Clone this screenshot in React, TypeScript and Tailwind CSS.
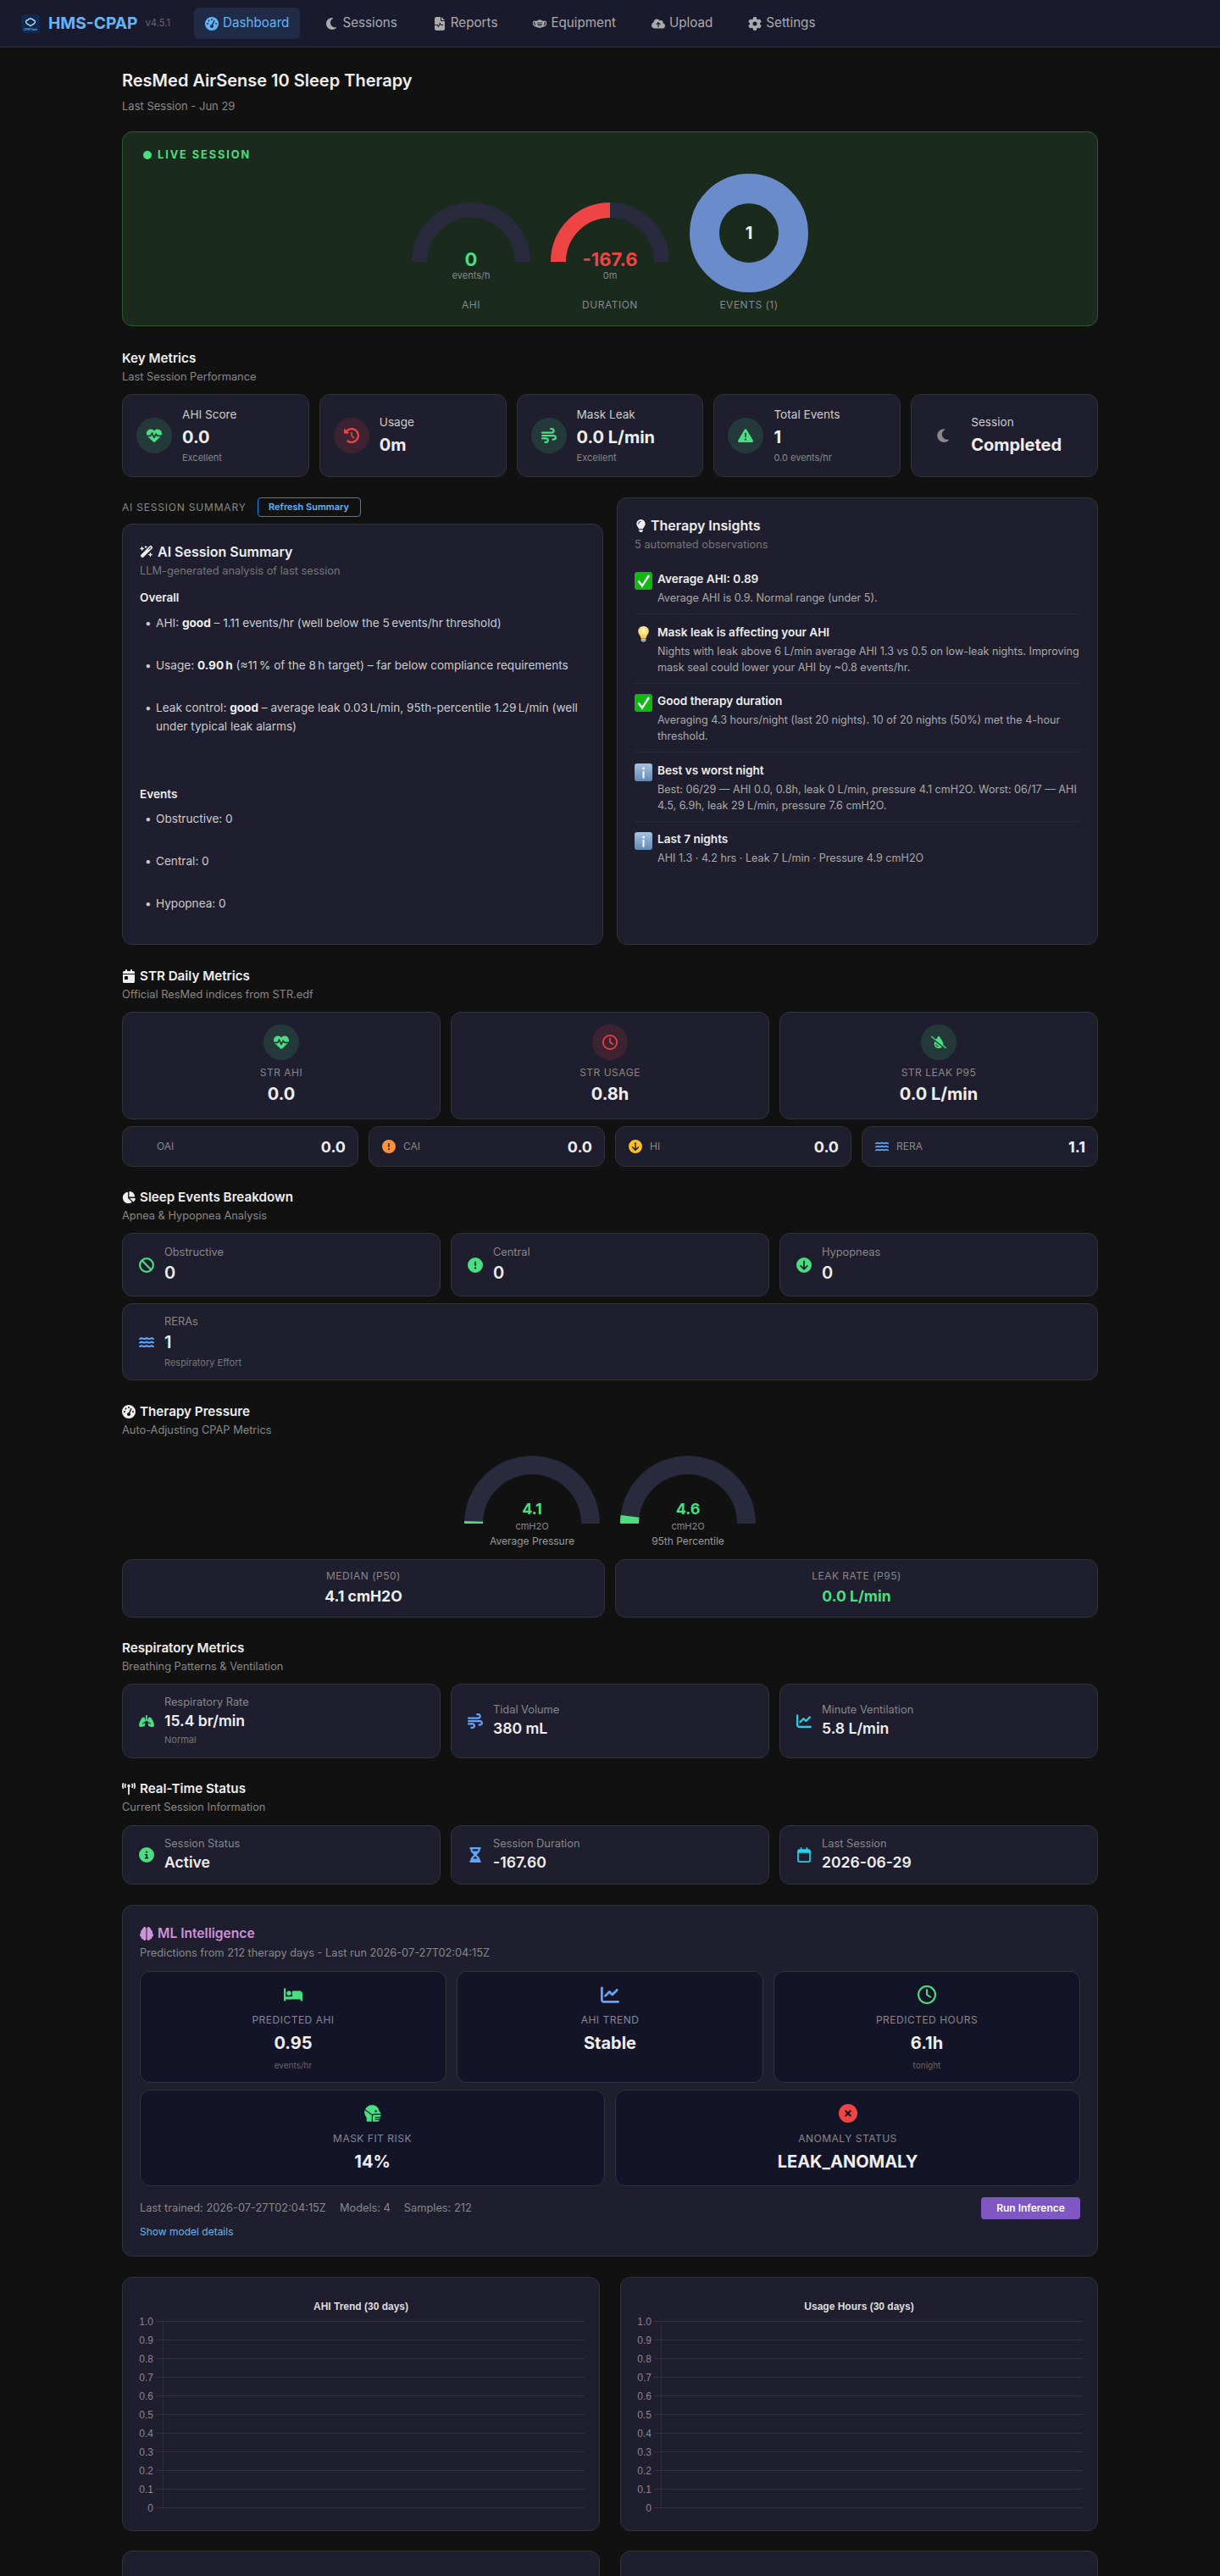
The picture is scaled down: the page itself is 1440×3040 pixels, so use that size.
import React from "react";
import {
  FaGaugeHigh, FaMoon, FaFileWaveform, FaMaskFace, FaCloudArrowUp, FaGear, FaHeartPulse, FaClockRotateLeft, FaWind,
  FaTriangleExclamation, FaWandMagicSparkles, FaLightbulb, FaCalendarDay, FaRegClock, FaDropletSlash, FaCircleExclamation,
  FaCircleArrowDown, FaWater, FaChartPie, FaBan, FaLungs, FaChartLine, FaTowerBroadcast, FaCircleInfo, FaHourglassHalf,
  FaRegCalendar, FaBrain, FaBed, FaHeadSideMask, FaCircleXmark,
} from "react-icons/fa6";

const card = "bg-[#1e1e2e] border border-[#333338] rounded-xl";

function polar(cx: number, cy: number, r: number, pct: number) {
  const a = Math.PI * (1 - pct);
  return [cx + r * Math.cos(a), cy - r * Math.sin(a)];
}

function Arc({ size, stroke, pct, color }: { size: number; stroke: number; pct: number; color: string }) {
  const c = size / 2;
  const r = c - stroke / 2;
  const h = size / 2;
  const [ex, ey] = polar(c, h, r, pct);
  return (
    <svg width={size} height={h} viewBox={`0 0 ${size} ${h}`} className="block">
      <path d={`M ${c - r} ${h} A ${r} ${r} 0 0 1 ${c + r} ${h}`} fill="none" stroke="#2a2a3e" strokeWidth={stroke} />
      {pct > 0 && <path d={`M ${c - r} ${h} A ${r} ${r} 0 0 1 ${ex} ${ey}`} fill="none" stroke={color} strokeWidth={stroke} />}
    </svg>
  );
}

function LiveGauge({ value, unit, label, pct, color }: { value: string; unit: string; label: string; pct: number; color: string }) {
  return (
    <div className="w-[140px] flex flex-col items-center">
      <div className="relative w-[140px] h-[70px]">
        <Arc size={140} stroke={18} pct={pct} color={color} />
        <div className="absolute left-0 right-0 top-[53px] text-center">
          <div className="text-[22px] leading-[28px] font-bold" style={{ color }}>{value}</div>
          <div className="text-[11px] leading-[14px] text-[#888] mt-[-2px]">{unit}</div>
        </div>
      </div>
      <div className="text-[12px] leading-[16px] text-[#888] tracking-[0.5px] mt-[43px]">{label}</div>
    </div>
  );
}

function PressureGauge({ value, label, pct }: { value: string; label: string; pct: number }) {
  return (
    <div className="w-[160px] flex flex-col items-center">
      <div className="relative w-[160px] h-[81px]">
        <Arc size={160} stroke={22} pct={pct} color="#4ade80" />
        <div className="absolute left-0 right-0 top-[51px] text-center">
          <div className="text-[18px] leading-[24px] font-bold text-[#4ade80]">{value}</div>
          <div className="text-[11px] leading-[14px] text-[#888] mt-[1px]">cmH2O</div>
        </div>
      </div>
      <div className="text-[12px] leading-[16px] text-[#999] mt-[12px]">{label}</div>
    </div>
  );
}

function Heading({ title, sub, icon, className }: { title: string; sub: string; icon?: React.ReactNode; className: string }) {
  return (
    <div className={className}>
      <h2 className="flex items-center gap-[5px] text-[15.2px] leading-[24px] font-semibold text-[#eeeeee]">{icon}{title}</h2>
      <p className="text-[12.8px] leading-[16px] text-[#888] mt-[2px]">{sub}</p>
    </div>
  );
}

function IconCircle({ tone, children }: { tone: "green" | "red" | "none"; children: React.ReactNode }) {
  const cls = tone === "green" ? "bg-[#4ade80]/15 text-[#4ade80]" : tone === "red" ? "bg-[#ef4444]/15 text-[#ef4444]" : "text-[#888]";
  return <div className={`w-[42px] h-[42px] rounded-full flex items-center justify-center shrink-0 text-[18px] ${cls}`}>{children}</div>;
}

function KeyCard({ icon, tone, label, value, sub }: { icon: React.ReactNode; tone: "green" | "red" | "none"; label: string; value: string; sub?: string }) {
  return (
    <div className={`${card} h-[98px] px-4 flex items-center gap-3`}>
      <IconCircle tone={tone}>{icon}</IconCircle>
      <div>
        <div className="text-[13.6px] leading-[18px] text-[#ccc]">{label}</div>
        <div className="text-[20px] leading-[28px] font-bold text-[#eeeeee] mt-[4px]">{value}</div>
        {sub && <div className="text-[11px] leading-[16px] text-[#888] mt-[2px]">{sub}</div>}
      </div>
    </div>
  );
}

function StrCard({ icon, tone, label, value }: { icon: React.ReactNode; tone: "green" | "red"; label: string; value: string }) {
  return (
    <div className={`${card} h-[127px] flex flex-col items-center pt-[14px]`}>
      <IconCircle tone={tone}>{icon}</IconCircle>
      <div className="text-[12px] leading-[16px] text-[#888] tracking-[0.5px] mt-[7px]">{label}</div>
      <div className="text-[20px] leading-[28px] font-bold text-[#eeeeee] mt-[3px]">{value}</div>
    </div>
  );
}

function MiniCard({ icon, label, value }: { icon?: React.ReactNode; label: string; value: string }) {
  return (
    <div className={`${card} h-[48px] px-[14px] flex items-center`}>
      <span className="w-[18px] flex justify-center text-[16px] shrink-0">{icon}</span>
      <span className="text-[12px] text-[#888] ml-[8px] flex-1">{label}</span>
      <span className="text-[18px] font-bold text-[#eeeeee]">{value}</span>
    </div>
  );
}

function StatCard({ icon, label, value, sub, h, big }: { icon: React.ReactNode; label: string; value: string; sub?: string; h: string; big?: boolean }) {
  return (
    <div className={`${card} ${h} px-[19px] flex items-center gap-[12px]`}>
      <span className="w-[18px] flex justify-center text-[18px] shrink-0">{icon}</span>
      <div>
        <div className="text-[12.8px] leading-[16px] text-[#888]">{label}</div>
        <div className={`${big ? "text-[20px] leading-[28px]" : "text-[17.6px] leading-[24px]"} font-semibold text-[#eeeeee] mt-[2px]`}>{value}</div>
        {sub && <div className="text-[11px] leading-[16px] text-[#777] mt-[2px]">{sub}</div>}
      </div>
    </div>
  );
}

function MlCard({ icon, label, value, sub, h }: { icon: React.ReactNode; label: string; value: string; sub?: string; h: string }) {
  return (
    <div className={`bg-[#141428] border border-[#333338] rounded-xl ${h} flex flex-col items-center pt-[15px]`}>
      <span className="h-[24px] flex items-center text-[22px]">{icon}</span>
      <div className="text-[12px] leading-[16px] text-[#888] tracking-[0.5px] mt-[10px]">{label}</div>
      <div className="text-[20px] leading-[28px] font-bold text-[#eeeeee] mt-[5px]">{value}</div>
      {sub && <div className="text-[10px] leading-[14px] text-[#666] mt-[5px]">{sub}</div>}
    </div>
  );
}

function EmojiBox({ kind }: { kind: "check" | "bulb" | "info" }) {
  if (kind === "bulb") {
    return (
      <svg width="21" height="21" viewBox="0 0 21 23" className="shrink-0 mt-[1px]">
        <defs>
          <radialGradient id="b" cx="50%" cy="35%" r="60%"><stop offset="0" stopColor="#fffbd0" /><stop offset="1" stopColor="#f6c945" /></radialGradient>
        </defs>
        <path d="M10.5 1C6.2 1 3.6 4.2 3.6 7.6c0 3.6 3 5.4 3.6 9h6.6c.6-3.6 3.6-5.4 3.6-9C17.4 4.2 14.8 1 10.5 1z" fill="url(#b)" />
        <rect x="7.4" y="16.6" width="6.2" height="4" rx="1" fill="#b9b9b9" />
        <rect x="8.6" y="20.6" width="3.8" height="1.4" rx=".7" fill="#777" />
      </svg>
    );
  }
  if (kind === "check") {
    return (
      <svg width="21" height="21" viewBox="0 0 21 21" className="shrink-0 mt-[1px]">
        <rect width="21" height="21" rx="3" fill="#12b812" />
        <path d="M4.500 10.500l4.500 6L17 4" fill="none" stroke="#fff" strokeWidth="2.400" />
      </svg>
    );
  }
  return (
    <svg width="21" height="21" viewBox="0 0 21 21" className="shrink-0 mt-[1px]">
      <defs>
        <linearGradient id="i" x1="0" y1="0" x2="0" y2="1"><stop offset="0" stopColor="#a6c3e0" /><stop offset="1" stopColor="#5f8ab5" /></linearGradient>
      </defs>
      <rect width="21" height="21" rx="3" fill="url(#i)" />
      <circle cx="10.500" cy="6" r="1.400" fill="#fff" />
      <rect x="9.500" y="9" width="2" height="8.500" fill="#fff" />
    </svg>
  );
}

function Insight({ kind, title, lines, cls }: { kind: "check" | "bulb" | "info"; title: string; lines: string; cls: string }) {
  return (
    <div className={`flex gap-[6px] ${cls}`}>
      <EmojiBox kind={kind} />
      <div className="flex-1">
        <div className="text-[13.6px] leading-[18px] font-semibold text-[#eeeeee]">{title}</div>
        <div className="text-[12.6px] leading-[19px] text-[#aaa] mt-[4px]">{lines}</div>
      </div>
    </div>
  );
}

function Bullet({ children }: { children: React.ReactNode }) {
  return (
    <li className="flex text-[13.6px] leading-[22px] text-[#ccc] mb-[28px] last:mb-0">
      <span className="w-[19px] shrink-0 pl-[6px] text-[#ccc]">•</span>
      <span>{children}</span>
    </li>
  );
}

function Chart({ title }: { title: string }) {
  const ticks = ["1.0", "0.9", "0.8", "0.7", "0.6", "0.5", "0.4", "0.3", "0.2", "0.1", "0"];
  return (
    <div className={`${card} h-[300px] overflow-hidden`}>
      <svg width="562" height="298" viewBox="0 0 562 298" className="block font-['Liberation_Sans',sans-serif]">
        <text x="281" y="38" textAnchor="middle" fontSize="12" fontWeight="700" fill="#dddddd">{title}</text>
        <line x1="47.500" y1="51" x2="47.500" y2="271" stroke="#2a2a38" />
        {ticks.map((t, i) => (
          <g key={t}>
            <line x1="39" x2="545" y1={51.5 + i * 22} y2={51.5 + i * 22} stroke="#333338" />
            <text x="36" y={55.5 + i * 22} textAnchor="end" fontSize="12" fill="#888888">{t}</text>
          </g>
        ))}
      </svg>
    </div>
  );
}

const navItems = [
  { label: "Dashboard", icon: <FaGaugeHigh />, active: true },
  { label: "Sessions", icon: <FaMoon /> },
  { label: "Reports", icon: <FaFileWaveform /> },
  { label: "Equipment", icon: <FaMaskFace /> },
  { label: "Upload", icon: <FaCloudArrowUp /> },
  { label: "Settings", icon: <FaGear /> },
];

export default function App() {
  return (
    <div className="h-[3040px] overflow-hidden bg-[#111111] font-['Inter',sans-serif]">
      <nav className="h-[56px] bg-[#1a1a2e] border-b border-[#333338] flex items-center pl-[25px]">
        <svg width="22" height="22" viewBox="0 0 22 22" className="shrink-0">
          <rect width="22" height="22" rx="4" fill="#0c2a52" />
          <path d="M7 11c-2-1-2-4 1-4.500C9 4.500 13 4.500 14 6.500c3 .5 3 3.500 1 4.500-1 1-3 1.500-4 2.500-1-1-3-1.500-4-2.500z" fill="none" stroke="#cfe6ff" strokeWidth="1.300" />
          <text x="11" y="18.500" textAnchor="middle" fontSize="3" fill="#bcd8f5">CPAP Dash</text>
        </svg>
        <span className="ml-[10px] text-[19.2px] font-bold text-[#64b5f6]">HMS-CPAP</span>
        <span className="ml-[9px] text-[11.2px] text-[#666]">v4.5.1</span>
        <div className="ml-[28px] flex items-center gap-[16px]">
          {navItems.map((n) => (
            <a key={n.label} className={`h-[37px] px-[13px] rounded-md flex items-center gap-[5px] text-[15.2px] ${n.active ? "bg-[#1f2b47] text-[#64b5f6]" : "text-[#aaaaaa]"}`}>
              <span className="text-[16px]">{n.icon}</span>{n.label}
            </a>
          ))}
        </div>
      </nav>

      <main className="w-[1152px] mx-auto">
        <h1 className="pt-[25px] text-[20px] leading-[28px] font-semibold text-[#eeeeee]">ResMed AirSense 10 Sleep Therapy</h1>
        <p className="mt-[8px] text-[13px] leading-[16px] text-[#888]">Last Session - Jun 29</p>

        <section className="mt-[22px] h-[230px] bg-[#1a2a1c] border border-[#2d5a2d] rounded-xl px-[24px] pt-[19px]">
          <div className="flex items-center gap-[7px] text-[12.8px] leading-[16px] font-bold tracking-[1.9px] text-[#4ade80]">
            <span className="w-[10px] h-[10px] rounded-full bg-[#4ade80]" />LIVE SESSION
          </div>
          <div className="flex justify-center items-end gap-[24px] mt-[14px]">
            <LiveGauge value="0" unit="events/h" label="AHI" pct={0} color="#4ade80" />
            <LiveGauge value="-167.6" unit="0m" label="DURATION" pct={0.5} color="#ef4444" />
            <div className="w-[140px] flex flex-col items-center">
              <div className="relative w-[140px] h-[140px]">
                <svg width="140" height="140" viewBox="0 0 140 140">
                  <circle cx="70" cy="70" r="52.500" fill="none" stroke="#6b8cca" strokeWidth="35" />
                </svg>
                <div className="absolute inset-0 flex items-center justify-center text-[20px] font-bold text-[#eeeeee]">1</div>
              </div>
              <div className="text-[12px] leading-[16px] text-[#888] tracking-[0.5px] mt-[7px]">EVENTS (1)</div>
            </div>
          </div>
        </section>

        <Heading className="mt-[26px]" title="Key Metrics" sub="Last Session Performance" />
        <div className="mt-[12px] grid grid-cols-5 gap-3">
          <KeyCard icon={<FaHeartPulse />} tone="green" label="AHI Score" value="0.0" sub="Excellent" />
          <KeyCard icon={<FaClockRotateLeft />} tone="red" label="Usage" value="0m" />
          <KeyCard icon={<FaWind />} tone="green" label="Mask Leak" value="0.0 L/min" sub="Excellent" />
          <KeyCard icon={<FaTriangleExclamation />} tone="green" label="Total Events" value="1" sub="0.0 events/hr" />
          <KeyCard icon={<FaMoon />} tone="none" label="Session" value="Completed" />
        </div>

        <div className="mt-[24px] grid grid-cols-2 gap-4 h-[528px]">
          <div className="flex flex-col gap-[8px]">
            <div className="h-[23px] flex items-center gap-[13px]">
              <span className="text-[12px] tracking-[0.8px] text-[#888]">AI SESSION SUMMARY</span>
              <button className="h-[23px] w-[122px] border border-[#1e88e5] rounded text-[11px] font-semibold text-[#64b5f6]">Refresh Summary</button>
            </div>
            <div className={`${card} flex-1 px-[20px] pt-[20px]`}>
              <h3 className="flex items-center gap-[5px] text-[16px] leading-[24px] font-semibold text-[#eeeeee]"><FaWandMagicSparkles className="text-[16px]" />AI Session Summary</h3>
              <p className="text-[12.8px] leading-[16px] text-[#777] mt-[3px]">LLM-generated analysis of last session</p>
              <div className="text-[13.6px] leading-[20px] font-semibold text-[#eeeeee] mt-[13px]">Overall</div>
              <ul className="mt-[9px]">
                <Bullet>AHI: <strong className="text-[#eeeeee]">good</strong> – 1.11 events/hr (well below the 5{"\u202f"}events/hr threshold)</Bullet>
                <Bullet>Usage: <strong className="text-[#eeeeee]">0.90{"\u202f"}h</strong> (≈11{"\u202f"}% of the 8{"\u202f"}h target) – far below compliance requirements</Bullet>
                <Bullet>Leak control: <strong className="text-[#eeeeee]">good</strong> – average leak 0.03{"\u202f"}L/min, 95th-percentile 1.29{"\u202f"}L/min (well under typical leak alarms)</Bullet>
              </ul>
              <div className="text-[13.6px] leading-[20px] font-semibold text-[#eeeeee] mt-[59px]">Events</div>
              <ul className="mt-[8px]">
                <Bullet>Obstructive: 0</Bullet>
                <Bullet>Central: 0</Bullet>
                <Bullet>Hypopnea: 0</Bullet>
              </ul>
            </div>
          </div>
          <div className={`${card} px-[20px] pt-[20px]`}>
            <h3 className="flex items-center gap-[4px] text-[16px] leading-[24px] font-semibold text-[#eeeeee]"><FaLightbulb className="text-[15px]" />Therapy Insights</h3>
            <p className="text-[12.8px] leading-[16px] text-[#777] mt-[3px]">5 automated observations</p>
            <div className="mt-[23px]">
              <Insight kind="check" title="Average AHI: 0.89" lines="Average AHI is 0.9. Normal range (under 5)." cls="pb-[9px] border-b border-[#2a2a3a]" />
              <Insight kind="bulb" title="Mask leak is affecting your AHI" lines="Nights with leak above 6 L/min average AHI 1.3 vs 0.5 on low-leak nights. Improving mask seal could lower your AHI by ~0.8 events/hr." cls="pt-[11.5px] pb-[9px] border-b border-[#2a2a3a]" />
              <Insight kind="check" title="Good therapy duration" lines="Averaging 4.3 hours/night (last 20 nights). 10 of 20 nights (50%) met the 4-hour threshold." cls="pt-[11.5px] pb-[9px] border-b border-[#2a2a3a]" />
              <Insight kind="info" title="Best vs worst night" lines="Best: 06/29 — AHI 0.0, 0.8h, leak 0 L/min, pressure 4.1 cmH2O. Worst: 06/17 — AHI 4.5, 6.9h, leak 29 L/min, pressure 7.6 cmH2O." cls="pt-[11.5px] pb-[9px] border-b border-[#2a2a3a]" />
              <Insight kind="info" title="Last 7 nights" lines="AHI 1.3 · 4.2 hrs · Leak 7 L/min · Pressure 4.9 cmH2O" cls="pt-[11.5px]" />
            </div>
          </div>
        </div>

        <Heading className="mt-[25px]" title="STR Daily Metrics" sub="Official ResMed indices from STR.edf" icon={<FaCalendarDay className="text-[16px]" />} />
        <div className="mt-[12px] grid grid-cols-3 gap-3">
          <StrCard icon={<FaHeartPulse />} tone="green" label="STR AHI" value="0.0" />
          <StrCard icon={<FaRegClock />} tone="red" label="STR USAGE" value="0.8h" />
          <StrCard icon={<FaDropletSlash />} tone="green" label="STR LEAK P95" value="0.0 L/min" />
        </div>
        <div className="mt-[8px] grid grid-cols-4 gap-3">
          <MiniCard label="OAI" value="0.0" />
          <MiniCard icon={<FaCircleExclamation className="text-[#fb923c]" />} label="CAI" value="0.0" />
          <MiniCard icon={<FaCircleArrowDown className="text-[#fbbf24]" />} label="HI" value="0.0" />
          <MiniCard icon={<FaWater className="text-[#60a5fa]" />} label="RERA" value="1.1" />
        </div>

        <Heading className="mt-[24px]" title="Sleep Events Breakdown" sub="Apnea & Hypopnea Analysis" icon={<FaChartPie className="text-[16px]" />} />
        <div className="mt-[12px] grid grid-cols-3 gap-3">
          <StatCard big h="h-[75px]" icon={<FaBan className="text-[#4ade80]" />} label="Obstructive" value="0" />
          <StatCard big h="h-[75px]" icon={<FaCircleExclamation className="text-[#4ade80]" />} label="Central" value="0" />
          <StatCard big h="h-[75px]" icon={<FaCircleArrowDown className="text-[#4ade80]" />} label="Hypopneas" value="0" />
        </div>
        <div className="mt-[8px]">
          <StatCard big h="h-[91px]" icon={<FaWater className="text-[#60a5fa]" />} label="RERAs" value="1" sub="Respiratory Effort" />
        </div>

        <Heading className="mt-[25px]" title="Therapy Pressure" sub="Auto-Adjusting CPAP Metrics" icon={<FaGaugeHigh className="text-[16px]" />} />
        <div className="mt-[22px] flex justify-center gap-[24px]">
          <PressureGauge value="4.1" label="Average Pressure" pct={0.012} />
          <PressureGauge value="4.6" label="95th Percentile" pct={0.04} />
        </div>
        <div className="mt-[13px] grid grid-cols-2 gap-3">
          <div className={`${card} h-[69px] flex flex-col items-center justify-center`}>
            <div className="text-[12px] leading-[16px] text-[#888] tracking-[0.5px]">MEDIAN (P50)</div>
            <div className="text-[17.6px] leading-[26px] font-bold text-[#eeeeee] mt-[3px]">4.1 cmH2O</div>
          </div>
          <div className={`${card} h-[69px] flex flex-col items-center justify-center`}>
            <div className="text-[12px] leading-[16px] text-[#888] tracking-[0.5px]">LEAK RATE (P95)</div>
            <div className="text-[17.6px] leading-[26px] font-bold text-[#4ade80] mt-[3px]">0.0 L/min</div>
          </div>
        </div>

        <Heading className="mt-[24px]" title="Respiratory Metrics" sub="Breathing Patterns & Ventilation" />
        <div className="mt-[12px] grid grid-cols-3 gap-3">
          <StatCard h="h-[88px]" icon={<FaLungs className="text-[#4ade80]" />} label="Respiratory Rate" value="15.4 br/min" sub="Normal" />
          <StatCard h="h-[88px]" icon={<FaWind className="text-[#60a5fa]" />} label="Tidal Volume" value="380 mL" />
          <StatCard h="h-[88px]" icon={<FaChartLine className="text-[#22d3ee]" />} label="Minute Ventilation" value="5.8 L/min" />
        </div>

        <Heading className="mt-[24px]" title="Real-Time Status" sub="Current Session Information" icon={<FaTowerBroadcast className="text-[16px]" />} />
        <div className="mt-[13px] grid grid-cols-3 gap-3">
          <StatCard h="h-[70px]" icon={<FaCircleInfo className="text-[#4ade80]" />} label="Session Status" value="Active" />
          <StatCard h="h-[70px]" icon={<FaHourglassHalf className="text-[#60a5fa]" />} label="Session Duration" value="-167.60" />
          <StatCard h="h-[70px]" icon={<FaRegCalendar className="text-[#22d3ee]" />} label="Last Session" value="2026-06-29" />
        </div>

        <section className={`${card} mt-[24px] h-[415px] px-[20px] pt-[21px]`}>
          <h3 className="flex items-center gap-[5px] text-[15.6px] leading-[24px] font-semibold text-[#ce93d8]"><FaBrain className="text-[16px]" />ML Intelligence</h3>
          <p className="text-[12.8px] leading-[16px] text-[#888] mt-[3px]">Predictions from 212 therapy days - Last run 2026-07-27T02:04:15Z</p>
          <div className="mt-[13px] grid grid-cols-3 gap-3">
            <MlCard h="h-[132px]" icon={<FaBed className="text-[#4ade80]" />} label="PREDICTED AHI" value="0.95" sub="events/hr" />
            <MlCard h="h-[132px]" icon={<FaChartLine className="text-[#60a5fa]" />} label="AHI TREND" value="Stable" />
            <MlCard h="h-[132px]" icon={<FaRegClock className="text-[#4ade80]" />} label="PREDICTED HOURS" value="6.1h" sub="tonight" />
          </div>
          <div className="mt-[8px] grid grid-cols-2 gap-3">
            <MlCard h="h-[114px]" icon={<FaHeadSideMask className="text-[#4ade80]" />} label="MASK FIT RISK" value="14%" />
            <MlCard h="h-[114px]" icon={<FaCircleXmark className="text-[#ef4444]" />} label="ANOMALY STATUS" value="LEAK_ANOMALY" />
          </div>
          <div className="mt-[13px] flex items-center justify-between">
            <div className="flex gap-[16px] text-[12.8px] text-[#888]">
              <span>Last trained: 2026-07-27T02:04:15Z</span><span>Models: 4</span><span>Samples: 212</span>
            </div>
            <button className="h-[26px] w-[117px] rounded bg-[#7e57c2] text-[12px] font-semibold text-white">Run Inference</button>
          </div>
          <a className="block mt-[7px] text-[12px] leading-[16px] text-[#64b5f6]">Show model details</a>
        </section>

        <div className="mt-[24px] grid grid-cols-2 gap-6">
          <Chart title="AHI Trend (30 days)" />
          <Chart title="Usage Hours (30 days)" />
        </div>
        <div className="mt-[23px] grid grid-cols-2 gap-6">
          <div className={`${card} h-[300px]`} />
          <div className={`${card} h-[300px]`} />
        </div>
      </main>
    </div>
  );
}
